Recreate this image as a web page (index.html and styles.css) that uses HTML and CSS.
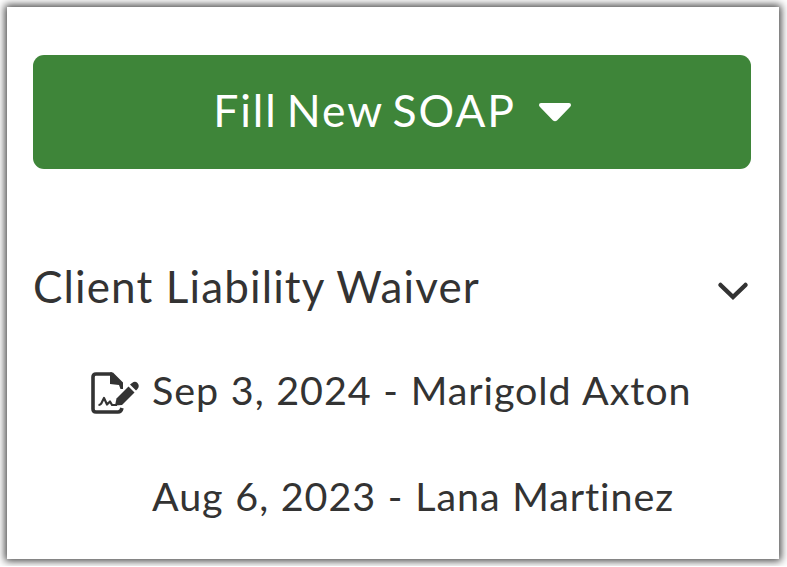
FILE: index.html
```
<!DOCTYPE html>
<html lang="en">

<head>
    <meta charset="UTF-8">
    <meta name="viewport" content="width=device-width, initial-scale=1.0">
    <title>Client Forms</title>
    <link rel="stylesheet" href="styles.css">
</head>

<body>
    <div class="card">
        <button type="button" class="btn">
            <span class="btn-label">Fill New SOAP</span>
            <svg class="caret" width="32" height="19" viewBox="0 0 32 19">
                <path d="M2 0H30Q32 0 32 2Q32 3 31 4L18 17.5Q16 19 14 17.5L1 4Q0 3 0 2Q0 0 2 0Z" fill="#fff" />
            </svg>
        </button>

        <div class="form-header">
            <h2>Client Liability Waiver</h2>
            <svg class="chevron" width="32" height="20" viewBox="0 0 32 20">
                <path d="M3.500 4L16 16L28.500 4" fill="none" stroke="#333" stroke-width="4.500" stroke-linecap="round" />
            </svg>
        </div>

        <ul class="form-list">
            <li>
                <svg class="sign-icon" width="50" height="44" viewBox="0 0 50 44">
                    <path d="M22 3H6Q3 3 3 6V38Q3 41 6 41H28Q31 41 32 37" fill="none" stroke="#333" stroke-width="3.600" />
                    <path d="M20 1.500H23L33 11.500V18H30.500L29 14L20 13Z" fill="#333" />
                    <path d="M8.500 34Q11 34 12 31L14 27L17 33.500L20 30.500L22 34H27" fill="none" stroke="#333" stroke-width="2.200" stroke-linejoin="round" />
                    <path d="M25 34.500L26.500 27.500L38.500 15.500L44.500 21.500L32 34Z" fill="#333" />
                    <path d="M40 13.500L42 12Q45 9.500 47.500 12Q50 15 47.500 18L46 19.500Z" fill="#333" />
                </svg>
                <span class="entry">Sep 3, 2024 - Marigold Axton</span>
            </li>
            <li>
                <span class="entry">Aug 6, 2023 - Lana Martinez</span>
            </li>
        </ul>
    </div>
</body>

</html>
```
FILE: styles.css
```
* {
    margin: 0;
    padding: 0;
    box-sizing: border-box;
    font-family: Lato, sans-serif;
}

body {
    background-color: #fff;
    color: #333;
    overflow: hidden;
}

.card {
    width: 772px;
    height: 552px;
    margin: 7px;
    padding: 48px 28px 0 26px;
    background: #fff;
    box-shadow: 0 0 8px 2px rgba(0, 0, 0, 0.75);
}

.btn {
    display: flex;
    align-items: center;
    justify-content: center;
    gap: 23px;
    width: 100%;
    height: 114px;
    background-color: #3e8539;
    color: white;
    border: none;
    border-radius: 11px;
    cursor: pointer;
}

.btn-label {
    padding-bottom: 6px;
    font-size: 44.5px;
    letter-spacing: 1.9px;
    word-spacing: -4px;
    white-space: nowrap;
}

.form-header {
    display: flex;
    align-items: center;
    justify-content: space-between;
    height: 66px;
    margin-top: 84px;
    padding-right: 2px;
}

h2 {
    font-size: 44px;
    font-weight: normal;
    letter-spacing: 1.13px;
    white-space: nowrap;
}

.chevron {
    margin-top: 10px;
}

.form-list {
    margin-top: 18px;
    list-style: none;
}

.form-list li {
    display: flex;
    align-items: center;
    height: 106px;
    padding-left: 57px;
}

.sign-icon {
    margin-top: 5px;
    margin-right: 12px;
}

.entry {
    padding-bottom: 2px;
    font-size: 39.5px;
    letter-spacing: 0.9px;
    word-spacing: 0.8px;
    white-space: nowrap;
}

.form-list li:last-child {
    padding-left: 119px;
}
```
